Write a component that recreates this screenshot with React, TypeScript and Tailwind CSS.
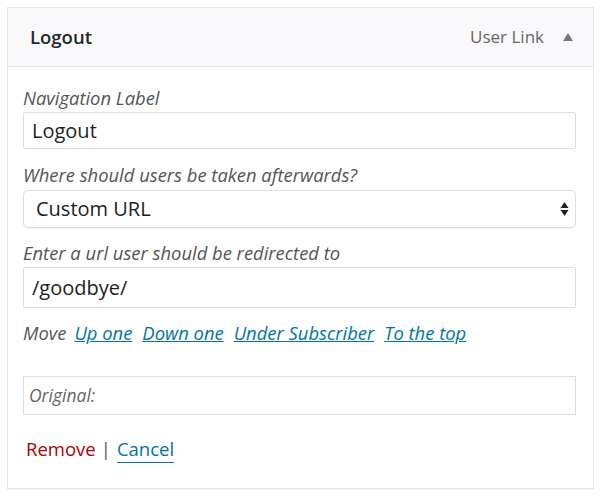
import React from "react";

export default function App() {
  const font = { fontFamily: '"Open Sans", "Noto Sans", sans-serif' };
  return (
    <div className="w-[600px] h-[495px] bg-white pt-[7px] pl-[7px]" style={font}>
      <div className="w-[587px] h-[482px] border border-[#e5e5e5] shadow-[0_1px_1px_rgba(0,0,0,0.04)] bg-white flex flex-col">
        <div className="h-[59px] bg-[#f9f9fb] border-b border-[#e5e5e5] flex items-center pl-[22px] pr-[15px]">
          <div className="text-[18.5px] font-semibold text-[#23282d]">Logout</div>
          <div className="ml-auto text-[17px] text-[#666]">User Link</div>
          <svg width="12" height="10" viewBox="0 0 12 10" className="ml-[18px] mr-[4px]">
            <polygon points="6,1 11,9 1,9" fill="#72777c" />
          </svg>
        </div>
        <div className="flex flex-col pl-[15px] pr-[17px]">
          <div className="mt-[20px] h-[22px] leading-[22px] text-[18.4px] italic text-[#555]">Navigation Label</div>
          <div className="mt-[3px] h-[37px] border border-[#ddd] rounded-[2px] flex items-center pl-[8px] text-[20px] text-[#222]">Logout</div>
          <div className="mt-[15px] h-[22px] leading-[22px] text-[18.4px] italic text-[#555]">Where should users be taken afterwards?</div>
          <div className="mt-[4px] h-[38px] border border-[#ddd] rounded-[5px] flex items-center pl-[12px] pr-[6px] text-[20px] text-[#222] shadow-[0_1px_1px_rgba(0,0,0,0.05)]">
            <span>Custom URL</span>
            <svg width="9" height="16" viewBox="0 0 9 16" className="ml-auto">
              <polygon points="4.5,1 8.5,7 0.5,7" fill="#222" />
              <polygon points="4.5,15 8.5,9 0.5,9" fill="#222" />
            </svg>
          </div>
          <div className="mt-[14px] h-[22px] leading-[22px] text-[18.4px] italic text-[#555]">Enter a url user should be redirected to</div>
          <div className="mt-[3px] h-[41px] border border-[#ddd] rounded-[2px] flex items-center pl-[8px] text-[20px] text-[#222]">/goodbye/</div>
          <div className="mt-[14px] h-[22px] leading-[22px] text-[18.4px] italic flex gap-[8px]">
            <span className="text-[#555]">Move</span>
            <span className="flex gap-[10px] text-[#0073aa] underline">
              <span>Up one</span>
              <span>Down one</span>
              <span>Under Subscriber</span>
              <span>To the top</span>
            </span>
          </div>
          <div className="mt-[32px] h-[39px] border border-[#ddd] flex items-center pl-[5px] text-[17.5px] italic text-[#666]">Original:</div>
          <div className="mt-[22px] h-[26px] text-[18.5px] flex items-start pl-[3px]">
            <span className="text-[#a00] leading-[24px]">Remove</span>
            <span className="ml-[5px] mr-[6px] text-[#555] leading-[24px]">|</span>
            <span className="text-[#0073aa] border-b border-[#0073aa] leading-[24px] pb-[1px]">Cancel</span>
          </div>
        </div>
      </div>
    </div>
  );
}
